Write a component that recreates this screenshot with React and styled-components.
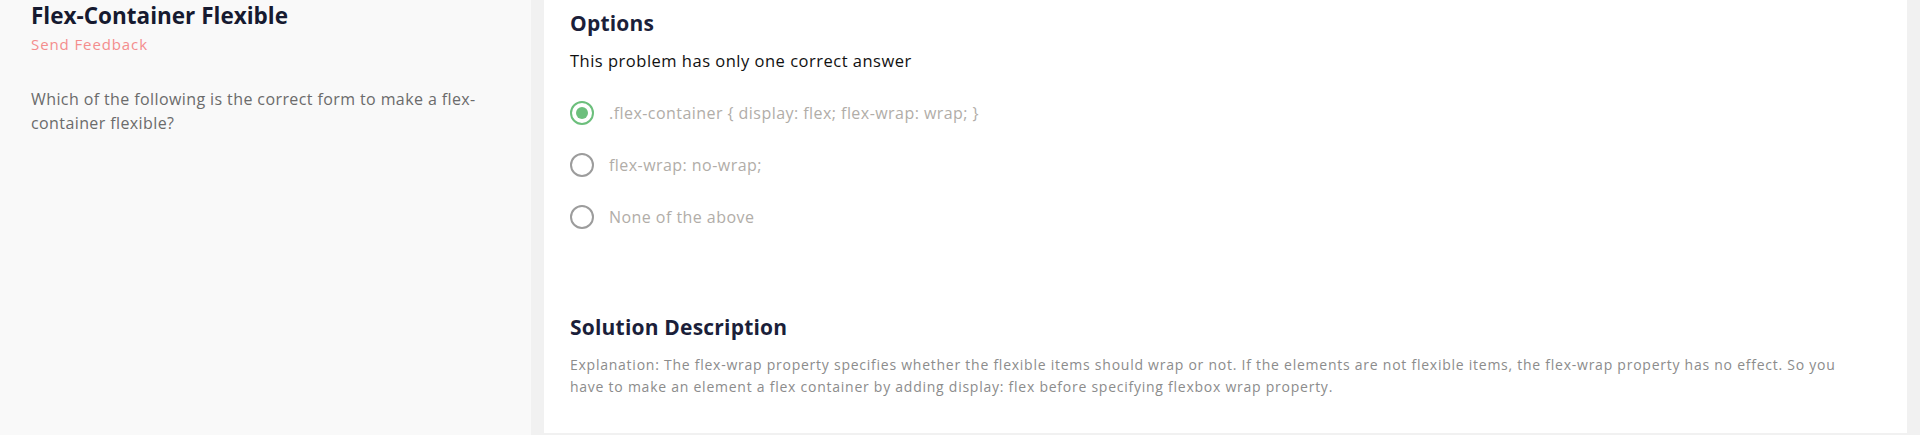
import styled, { createGlobalStyle } from "styled-components";

const GlobalStyle = createGlobalStyle`
  html, body {
    margin: 0;
    padding: 0;
    background: #f1f1f1;
    font-family: "Open Sans", "Noto Sans", sans-serif;
  }
`;

const options = [
  { id: 1, label: ".flex-container { display: flex; flex-wrap: wrap; }", checked: true },
  { id: 2, label: "flex-wrap: no-wrap;", checked: false },
  { id: 3, label: "None of the above", checked: false },
];

function App() {
  return (
    <>
      <GlobalStyle />
      <Page>
        <Sidebar>
          <Title>Flex-Container Flexible</Title>
          <FeedbackLink href="#">Send Feedback</FeedbackLink>
          <Question>
            Which of the following is the correct form to make a flex-container flexible?
          </Question>
        </Sidebar>
        <Main>
          <Card>
            <SectionTitle>Options</SectionTitle>
            <Hint>This problem has only one correct answer</Hint>
            <OptionList>
              {options.map((opt) => (
                <OptionRow key={opt.id}>
                  <Radio checked={opt.checked} />
                  <OptionLabel>{opt.label}</OptionLabel>
                </OptionRow>
              ))}
            </OptionList>
            <Solution>
              <SectionTitle>Solution Description</SectionTitle>
              <Explanation>
                Explanation: The flex-wrap property specifies whether the flexible items
                should wrap or not. If the elements are not flexible items, the flex-wrap
                property has no effect. So you have to make an element a flex container by
                adding display: flex before specifying flexbox wrap property.
              </Explanation>
            </Solution>
          </Card>
        </Main>
      </Page>
    </>
  );
}

export default App;

const Page = styled.div`
  display: flex;
  height: 435px;
  overflow: hidden;
`;

const Sidebar = styled.aside`
  width: 531px;
  flex-shrink: 0;
  box-sizing: border-box;
  padding: 1px 31px 0;
  background: #f9f9f9;
  display: flex;
  flex-direction: column;
`;

const Title = styled.h1`
  margin: 0;
  font-size: 22.5px;
  line-height: 30px;
  font-weight: 700;
  color: #161a30;
`;

const FeedbackLink = styled.a`
  margin-top: 2px;
  font-size: 15px;
  line-height: 22px;
  color: #f48d8d;
  text-decoration: none;
  letter-spacing: 0.9px;
`;

const Question = styled.p`
  margin: 32px 0 0;
  font-size: 16px;
  line-height: 24px;
  letter-spacing: 0.4px;
  color: #6b6b6b;
`;

const Main = styled.main`
  flex: 1;
  display: flex;
  padding: 0 13px 2px;
  background: #f1f1f1;
`;

const Card = styled.section`
  flex: 1;
  background: #ffffff;
  padding: 8px 44px 0 26px;
  display: flex;
  flex-direction: column;
`;

const SectionTitle = styled.h2`
  margin: 0;
  font-size: 21px;
  line-height: 30px;
  font-weight: 700;
  letter-spacing: 0.2px;
  color: #1b1f3a;
`;

const Hint = styled.p`
  margin: 12px 0 0;
  font-size: 16.5px;
  line-height: 22px;
  letter-spacing: 0.5px;
  color: #111111;
`;

const OptionList = styled.ul`
  list-style: none;
  margin: 28px 0 0;
  padding: 0;
  display: flex;
  flex-direction: column;
  gap: 26px;
`;

const OptionRow = styled.li`
  display: flex;
  align-items: center;
  gap: 15px;
  height: 26px;
`;

const Radio = styled.span`
  width: 24px;
  height: 24px;
  box-sizing: border-box;
  border-radius: 50%;
  border: 2px solid ${(p) => (p.checked ? "#6cbf7c" : "#9c9c9c")};
  display: grid;
  place-items: center;

  &::after {
    content: "";
    width: 12px;
    height: 12px;
    border-radius: 50%;
    background: ${(p) => (p.checked ? "#6cbf7c" : "transparent")};
  }
`;

const OptionLabel = styled.span`
  font-size: 16px;
  letter-spacing: 0.45px;
  color: #b1ada8;
`;

const Solution = styled.div`
  margin-top: 82px;
`;

const Explanation = styled.p`
  margin: 12px 0 0;
  font-size: 14px;
  line-height: 22px;
  letter-spacing: 0.75px;
  color: #8c8c8c;
`;
